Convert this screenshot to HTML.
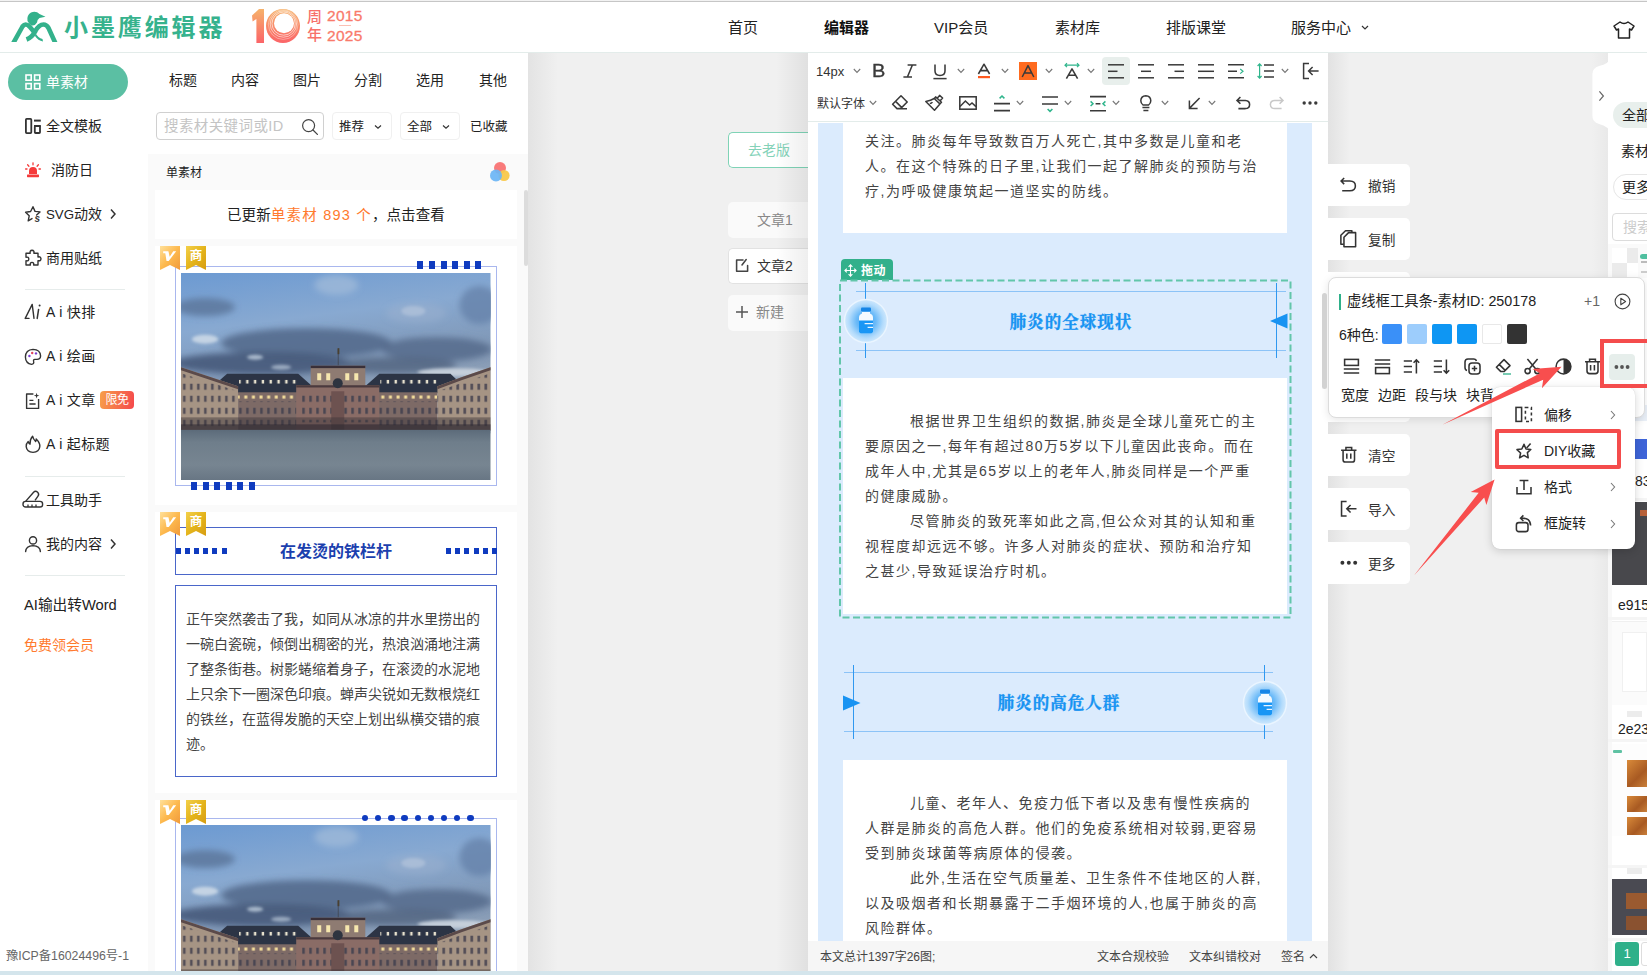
<!DOCTYPE html>
<html lang="zh-CN">
<head>
<meta charset="utf-8">
<title>小墨鹰编辑器</title>
<style>
*{box-sizing:border-box;margin:0;padding:0}
html,body{width:1647px;height:975px;overflow:hidden;background:#f0f0f0}
body{font-family:"Liberation Sans","Noto Sans CJK SC",sans-serif;font-size:14px;color:#222;position:relative}
.abs{position:absolute}
.t{position:absolute;white-space:nowrap;line-height:1}
svg{position:absolute;overflow:visible}
/* header */
#hdr{left:0;top:0;width:1647px;height:53px;background:#fff;border-top:1px solid #f2f2f2;border-bottom:1px solid #e3ecea}
/* left nav */
#nav{left:0;top:53px;width:148px;height:918px;background:#fff}
.ni{position:absolute;left:46px;font-size:14px;line-height:20px;white-space:nowrap;color:#222}
.sep{position:absolute;left:25px;width:100px;height:1px;background:#e6eceb}
/* material panel */
#mat{left:148px;top:53px;width:380px;height:918px;background:#fff}
#matg{left:148px;top:154px;width:380px;height:817px;background:#fafafa}
.card{position:absolute;left:155px;width:362px;background:#fff}
/* editor */
#ed{left:808px;top:53px;width:520px;height:918px;background:#fff}
#edbg{left:818px;top:123px;width:494px;height:825px;background:#dbebfd}
.p{position:absolute;font-size:14px;line-height:25.2px;letter-spacing:1px;color:#333;white-space:nowrap}
</style>
</head>
<body>
<div id="hdr" class="abs"></div><div class="abs" style="left:0;top:1px;width:1647px;height:1px;background:#c6c6c6"></div>
<div id="nav" class="abs"></div>
<div id="mat" class="abs"></div>
<div id="matg" class="abs"></div>
<div id="ed" class="abs"></div>
<div id="edbg" class="abs"></div>

<!-- header content -->
<svg style="left:0;top:0;overflow:hidden" width="60" height="42" viewBox="0 0 60 42">
 <g fill="none" stroke="#33b18b" stroke-width="4.6" stroke-linejoin="round">
  <path d="M13 43.6 L22.5 26.5 Q25.5 22.5 29.5 26.5 Q33 30.5 35.5 34"/>
  <path d="M26.5 39.5 Q32 37.5 35 31.5 Q39 24.5 43.5 24.5 Q46.5 24.5 48.5 28 L55.8 44"/>
 </g>
 <path d="M35.5 33 Q38 38 42.5 39 L43 41.5 Q38 40.5 35 36 Z" fill="#33b18b"/>
 <path d="M27.5 21 Q26.5 15 31 12.5 Q36 10.5 39.5 14 L45.5 16.8 L39.5 18 Q37 19.5 37 22.5 Q35 26 32 25.5 Q29 24.5 27.5 21 Z" fill="#33b18b"/>
</svg>
<div class="t" style="left:64px;top:16px;font-size:24px;font-weight:bold;color:#36b28d;letter-spacing:2.9px">小墨鹰编辑器</div>
<svg style="left:250px;top:8px" width="52" height="36" viewBox="0 0 52 36">
 <defs><linearGradient id="g10" x1="0" y1="0" x2="0" y2="1"><stop offset="0" stop-color="#f6b26b"/><stop offset="1" stop-color="#fb6468"/></linearGradient></defs>
 <path d="M2 7.5 L9 1 L14 1 L14 35 L6.4 35 L6.4 11 L2.6 13.4 Z" fill="url(#g10)"/>
 <circle cx="33" cy="18" r="17" fill="url(#g10)"/>
 <circle cx="34" cy="15.2" r="10" fill="#fff"/>
 <circle cx="33.6" cy="15.6" r="11.6" fill="none" stroke="#fff" stroke-width="0.7" opacity="0.9"/>
 <circle cx="33.4" cy="16" r="13.2" fill="none" stroke="#fff" stroke-width="0.7" opacity="0.8"/>
 <circle cx="33.2" cy="16.6" r="14.8" fill="none" stroke="#fff" stroke-width="0.6" opacity="0.6"/>
</svg>
<div class="t" style="left:307px;top:9px;font-size:15px;color:#f7706a;font-weight:500">周</div>
<div class="t" style="left:307px;top:27px;font-size:15px;color:#f7706a;font-weight:500">年</div>
<div class="t" style="left:327px;top:7.5px;font-size:15.5px;color:#f97a6b;letter-spacing:0.3px;-webkit-text-stroke:0.3px #f97a6b">2015</div>
<div class="t" style="left:327px;top:28px;font-size:15.5px;color:#f97a6b;letter-spacing:0.3px;-webkit-text-stroke:0.3px #f97a6b">2025</div>
<div class="abs" style="left:339px;top:25px;width:12px;height:1px;background:#fbc0b4"></div>
<div class="t" style="left:728px;top:19.5px;font-size:15px;color:#222">首页</div>
<div class="t" style="left:824px;top:19.5px;font-size:15px;color:#111;font-weight:bold">编辑器</div>
<div class="t" style="left:934px;top:19.5px;font-size:15px;color:#222">VIP会员</div>
<div class="t" style="left:1055px;top:19.5px;font-size:15px;color:#222">素材库</div>
<div class="t" style="left:1166px;top:19.5px;font-size:15px;color:#222">排版课堂</div>
<div class="t" style="left:1291px;top:19.5px;font-size:15px;color:#222">服务中心</div>
<svg style="left:1361px;top:25px" width="8" height="5" viewBox="0 0 8 5"><path d="M1 1 L4 4 L7 1" fill="none" stroke="#333" stroke-width="1.2"/></svg>
<svg style="left:1612px;top:20px" width="24" height="20" viewBox="0 0 24 20"><path d="M8 2 Q12 5 16 2 L22 6 L19.5 10 L17.5 9 L17.5 18 L6.5 18 L6.5 9 L4.5 10 L2 6 Z" fill="none" stroke="#222" stroke-width="1.5" stroke-linejoin="round"/></svg>
<!--HEADER-->
<!-- nav content -->
<div class="abs" style="left:8px;top:64px;width:120px;height:36px;border-radius:18px;background:#5bbfa3"></div>
<svg style="left:25px;top:74px" width="16" height="16" viewBox="0 0 16 16"><g fill="none" stroke="#fff" stroke-width="1.6"><rect x="1" y="1" width="5.2" height="5.2"/><rect x="9.6" y="1" width="5.2" height="5.2"/><rect x="1" y="9.6" width="5.2" height="5.2"/><rect x="9.6" y="9.6" width="5.2" height="5.2"/></g></svg>
<div class="ni" style="top:72px;left:46px;color:#fff">单素材</div>
<svg style="left:25px;top:118px" width="16" height="16" viewBox="0 0 16 16"><g fill="none" stroke="#333" stroke-width="1.8"><rect x="0.9" y="0.9" width="5.4" height="14.2" rx="0.8"/><path d="M9 2.6 H15.8" stroke-width="2"/><rect x="9.8" y="8" width="5.2" height="7" rx="0.8"/><path d="M9 8 H15.8" stroke-width="2"/></g></svg>
<div class="ni" style="top:116px;left:46px;color:#222">全文模板</div>
<svg style="left:25px;top:162px" width="16" height="16" viewBox="0 0 16 16"><g fill="#f53a3a"><path d="M4 12 V9 Q4 5 8 5 Q12 5 12 9 V12 Z"/><rect x="2" y="12.6" width="12" height="2.6" rx="0.6"/></g><g stroke="#f53a3a" stroke-width="1.3" stroke-linecap="round"><path d="M8 0.8 V2.8"/><path d="M2.6 2.8 L3.9 4.2"/><path d="M13.4 2.8 L12.1 4.2"/><path d="M0.6 7 H2"/><path d="M14 7 H15.4"/></g></svg>
<div class="ni" style="top:160px;left:51px;color:#222">消防日</div>
<svg style="left:24px;top:205px" width="18" height="18" viewBox="0 0 18 18"><path d="M9 1.8 L11 6.4 L16 6.9 L12.6 10 M8 13.6 L4.2 15.8 L5.2 10.8 L1.6 7.2 L6.6 6.5 L9 1.8" fill="none" stroke="#333" stroke-width="1.4" stroke-linejoin="round" stroke-linecap="round"/><text x="10.6" y="17" font-size="10" font-family="Liberation Sans, sans-serif" font-weight="bold" font-style="italic" fill="#333">s</text></svg>
<div class="ni" style="top:204px;left:46px;color:#222"><span style="font-size:13.3px">SVG</span>动效</div>
<svg style="left:109px;top:208px" width="8" height="12" viewBox="0 0 8 12"><path d="M2 1.5 L6 6 L2 10.5" fill="none" stroke="#333" stroke-width="1.5"/></svg>
<svg style="left:24px;top:249px" width="18" height="18" viewBox="0 0 18 18"><path d="M6.2 4.2 Q5.6 1.4 8 1.2 Q10.6 1.4 9.8 4.2 H14 V8 Q16.8 7.2 17 9.8 Q16.8 12.4 14 11.6 V16 H9.6 Q10.2 13.4 8 13.4 Q5.8 13.4 6.4 16 H2 V11.8 Q4.8 12.4 4.8 10 Q4.8 7.6 2 8.2 V4.2 Z" fill="none" stroke="#333" stroke-width="1.4" stroke-linejoin="round"/></svg>
<div class="ni" style="top:248px;left:46px;color:#222">商用贴纸</div>
<div class="sep" style="top:289px"></div>
<svg style="left:24px;top:303px" width="20" height="18" viewBox="0 0 20 18"><path d="M1.2 15.4 L8.2 1.4 L10 15.4 M1.2 15.4 H5" fill="none" stroke="#333" stroke-width="1.4" stroke-linejoin="round" stroke-linecap="round"/><path d="M14.6 6.4 L13.2 15.4" stroke="#333" stroke-width="1.5" stroke-linecap="round"/><circle cx="15.6" cy="2.6" r="1" fill="#333"/></svg>
<div class="ni" style="top:302px;left:46px;color:#222;letter-spacing:0.35px">A i 快排</div>
<svg style="left:24px;top:348px" width="18" height="18" viewBox="0 0 18 18"><path d="M9 1.4 Q16.4 1.6 16.6 8 Q16.4 11.6 12.6 11.4 H10.8 Q9.2 11.6 9.6 13.2 Q10.4 16 7.6 16.4 Q1.6 15.4 1.4 9 Q1.6 1.8 9 1.4 Z" fill="none" stroke="#333" stroke-width="1.4"/><circle cx="5.4" cy="8" r="1.2" fill="#7a3fd0"/><circle cx="8.2" cy="5" r="1.2" fill="#e0455a"/><circle cx="12" cy="5.4" r="1.2" fill="#7a3fd0"/></svg>
<div class="ni" style="top:346px;left:46px;color:#222;letter-spacing:0.35px">A i 绘画</div>
<svg style="left:25px;top:392px" width="16" height="18" viewBox="0 0 16 18"><path d="M8.4 2 H1.6 V16.4 H13.6 V7" fill="none" stroke="#333" stroke-width="1.4" stroke-linejoin="round"/><path d="M4.4 8.4 H8.4 M4.4 12 H10.6" stroke="#333" stroke-width="1.4"/><path d="M11.6 0.8 L12.3 2.9 L14.4 3.6 L12.3 4.3 L11.6 6.4 L10.9 4.3 L8.8 3.6 L10.9 2.9 Z" fill="#333"/></svg>
<div class="ni" style="top:390px;left:46px;color:#222;letter-spacing:0.35px">A i 文章</div>
<div class="abs" style="left:100px;top:391px;width:34px;height:18px;border-radius:4px;background:linear-gradient(100deg,#f7a04a,#f5484c);color:#fff;font-size:12px;line-height:18px;text-align:center;letter-spacing:-0.5px">限免</div>
<svg style="left:24px;top:435px" width="18" height="19" viewBox="0 0 18 19"><path d="M8.6 1.2 Q9.4 4.6 11.6 6.6 Q12.4 5.4 12.2 4 Q16.2 8 15.8 11.6 Q15.2 17 9 17.4 Q2.8 17 2.2 11.6 Q2 8.8 4.2 6.6 Q4.8 8.6 6 9.2 Q5.8 4.4 8.6 1.2 Z" fill="none" stroke="#333" stroke-width="1.4" stroke-linejoin="round"/></svg>
<div class="ni" style="top:434px;left:46px;color:#222;letter-spacing:0.35px">A i 起标题</div>
<div class="sep" style="top:476px"></div>
<svg style="left:22px;top:489px" width="22" height="20" viewBox="0 0 22 20"><path d="M3.4 12.6 L11.6 3.2 Q13.4 1.4 15.4 3 Q17.6 5 16 7.2 L13 11.4" fill="none" stroke="#333" stroke-width="1.4" stroke-linejoin="round"/><rect x="1" y="12.4" width="19.6" height="5.6" rx="2.6" fill="#fff" stroke="#333" stroke-width="1.4"/><path d="M6 15.4 V18 M10 15.4 V18 M14 15.4 V18" stroke="#333" stroke-width="1.3"/></svg>
<div class="ni" style="top:490px;left:46px;color:#222">工具助手</div>
<svg style="left:24px;top:535px" width="18" height="18" viewBox="0 0 18 18"><circle cx="9" cy="5.4" r="3.6" fill="none" stroke="#333" stroke-width="1.4"/><path d="M1.6 16.6 Q2 10.8 9 10.6 Q16 10.8 16.4 16.6" fill="none" stroke="#333" stroke-width="1.4" stroke-linecap="round"/></svg>
<div class="ni" style="top:534px;left:46px;color:#222">我的内容</div>
<svg style="left:109px;top:538px" width="8" height="12" viewBox="0 0 8 12"><path d="M2 1.5 L6 6 L2 10.5" fill="none" stroke="#333" stroke-width="1.5"/></svg>
<div class="sep" style="top:575px"></div>
<div class="ni" style="top:595px;left:24px;color:#222;font-size:14.7px">AI输出转Word</div>
<div class="ni" style="top:635px;left:24px;color:#ff7a2e;font-size:14px">免费领会员</div>
<div class="t" style="left:6px;top:950px;font-size:12.3px;color:#666">豫ICP备16024496号-1</div>
<!--NAV-->
<!--BEGIN mat-->
<!-- material panel -->
<div class="t" style="left:169px;top:73px;font-size:14px;color:#222">标题</div>
<div class="t" style="left:231px;top:73px;font-size:14px;color:#222">内容</div>
<div class="t" style="left:293px;top:73px;font-size:14px;color:#222">图片</div>
<div class="t" style="left:354px;top:73px;font-size:14px;color:#222">分割</div>
<div class="t" style="left:416px;top:73px;font-size:14px;color:#222">选用</div>
<div class="t" style="left:479px;top:73px;font-size:14px;color:#222">其他</div>
<div class="abs" style="left:156px;top:112px;width:168px;height:28px;border:1px solid #d0d0d0;border-radius:4px;background:#fff"></div>
<div class="t" style="left:164px;top:119px;font-size:14.5px;color:#c4c4c4;letter-spacing:0.4px">搜素材关键词或ID</div>
<svg style="left:301px;top:118px" width="18" height="18" viewBox="0 0 18 18"><circle cx="7.6" cy="7.6" r="6" fill="none" stroke="#444" stroke-width="1.2"/><path d="M12 12 L16.4 16.4" stroke="#444" stroke-width="1.3" stroke-linecap="round"/></svg>
<div class="abs" style="left:332px;top:112px;width:60px;height:28px;border:1px solid #f0f0f0;border-radius:4px;background:#fff"></div>
<div class="t" style="left:339px;top:121px;font-size:12.5px;color:#222">推荐</div>
<svg style="left:374px;top:124px" width="8" height="6" viewBox="0 0 8 6"><path d="M1 1.5 L4 4.2 L7 1.5" fill="none" stroke="#333" stroke-width="1.2"/></svg>
<div class="abs" style="left:400px;top:112px;width:60px;height:28px;border:1px solid #f0f0f0;border-radius:4px;background:#fff"></div>
<div class="t" style="left:407px;top:121px;font-size:12.5px;color:#222">全部</div>
<svg style="left:442px;top:124px" width="8" height="6" viewBox="0 0 8 6"><path d="M1 1.5 L4 4.2 L7 1.5" fill="none" stroke="#333" stroke-width="1.2"/></svg>
<div class="t" style="left:470px;top:121px;font-size:12.5px;color:#222">已收藏</div>
<div class="t" style="left:166px;top:167px;font-size:12px;color:#222">单素材</div>
<svg style="left:489px;top:161px" width="22" height="22" viewBox="0 0 22 22"><circle cx="11" cy="7" r="6" fill="#f97474" opacity="0.95"/><circle cx="15" cy="14.5" r="5.6" fill="#f9c84a" opacity="0.95"/><circle cx="7" cy="14.5" r="6" fill="#6bb5f5" opacity="0.92"/></svg>
<div class="card" style="top:190px;height:49px"></div>
<div class="t" style="left:227px;top:208px;font-size:14.5px;color:#222;letter-spacing:0.1px">已更新<span style="color:#ff7a2e;letter-spacing:1.2px">单素材 893 个</span>，点击查看</div>
<div class="abs" style="left:524px;top:190px;width:4px;height:76px;border-radius:2px;background:#dcdcdc"></div>
<div class="card" style="top:246px;height:259px"></div>
<div class="abs" style="left:175px;top:266px;width:322px;height:220px;border:1px solid #a9b7ee"></div>
<svg style="left:181px;top:272.5px;overflow:hidden" width="309.5" height="207" overflow="hidden" viewBox="0 0 309 206.50" preserveAspectRatio="none">
<defs>
<linearGradient id="skya" x1="0" y1="0" x2="0.25" y2="1"><stop offset="0" stop-color="#6c9ad2"/><stop offset="0.35" stop-color="#88a9d1"/><stop offset="0.7" stop-color="#7f95b2"/><stop offset="1" stop-color="#a9b6c5"/></linearGradient>
<linearGradient id="gnda" x1="0" y1="0" x2="0" y2="1"><stop offset="0" stop-color="#5c6b7a"/><stop offset="0.25" stop-color="#6f7e8b"/><stop offset="0.7" stop-color="#778591"/><stop offset="1" stop-color="#687684"/></linearGradient>
<filter id="bla" x="-20%" y="-50%" width="140%" height="200%"><feGaussianBlur stdDeviation="3.2"/></filter>
<filter id="bsa" x="-20%" y="-50%" width="140%" height="200%"><feGaussianBlur stdDeviation="1.5"/></filter>
<pattern id="wina" x="0" y="0" width="7" height="12" patternUnits="userSpaceOnUse"><rect x="2" y="2.5" width="2.6" height="6" fill="#4a4652"/></pattern>
<pattern id="winla" x="0" y="122" width="7.6" height="40" patternUnits="userSpaceOnUse"><rect x="2.4" y="0" width="3" height="3.4" fill="#f2dc9a"/></pattern>
<pattern id="dorma" x="0" y="106.5" width="7.8" height="40" patternUnits="userSpaceOnUse"><rect x="2.6" y="0" width="2.4" height="4" fill="#e9e3cf"/></pattern>
</defs>
<rect x="0" y="0" width="309" height="160" fill="url(#skya)"/>
<g filter="url(#bla)">
<ellipse cx="24" cy="34" rx="30" ry="9" fill="#5a7499" opacity="0.8"/>
<ellipse cx="298" cy="32" rx="20" ry="19" fill="#6380a8" opacity="0.75"/>
<ellipse cx="125" cy="70" rx="85" ry="15" fill="#52678a" opacity="0.85"/>
<ellipse cx="80" cy="90" rx="90" ry="11" fill="#465a7a" opacity="0.9"/>
<ellipse cx="255" cy="76" rx="55" ry="12" fill="#566b8c" opacity="0.85"/>
<ellipse cx="215" cy="92" rx="60" ry="8" fill="#51647f" opacity="0.8"/>
<ellipse cx="155" cy="12" rx="22" ry="10" fill="#a3bcda" opacity="0.7"/>
<ellipse cx="235" cy="40" rx="30" ry="10" fill="#9bb2d0" opacity="0.5"/>
</g>
<g filter="url(#bsa)">
<ellipse cx="24" cy="66" rx="13" ry="4.5" fill="#cbd8e7" opacity="0.9"/>
<ellipse cx="74" cy="84" rx="8" ry="2.5" fill="#c1cfdf" opacity="0.8"/>
<ellipse cx="100" cy="94" rx="10" ry="2.5" fill="#bccadb" opacity="0.7"/>
<ellipse cx="272" cy="99" rx="36" ry="4" fill="#cbd4de" opacity="0.9"/>
<ellipse cx="232" cy="38" rx="12" ry="5" fill="#b3c5db" opacity="0.7"/>
</g>
<!-- roofs -->
<polygon points="33,112 46,100.5 117,100.5 130,112 130,120 57,120" fill="#2c3445"/>
<polygon points="185,112 198,100.5 269,100.5 281,112 257,120 185,120" fill="#2c3445"/>
<rect x="58" y="106.5" width="58" height="4" fill="url(#dorma)"/>
<rect x="199" y="106.5" width="58" height="4" fill="url(#dorma)"/>
<!-- facades -->
<rect x="57" y="119" width="60" height="38" fill="#7d6a66"/>
<rect x="196" y="119" width="60" height="38" fill="#7d6a66"/>
<rect x="57" y="122" width="60" height="4" fill="url(#winla)"/>
<rect x="196" y="122" width="60" height="4" fill="url(#winla)"/>
<rect x="57" y="128" width="60" height="24" fill="url(#wina)"/>
<rect x="196" y="128" width="60" height="24" fill="url(#wina)"/>
<!-- wings -->
<polygon points="0,94 30,104 57,113 57,157 0,157" fill="#a69484"/>
<polygon points="309,94 280,104 256,113 256,157 309,157" fill="#a69484"/>
<polygon points="0,94 30,104 57,113 57,116 30,107 0,97" fill="#5b4a4a"/>
<polygon points="309,94 280,104 256,113 256,116 280,107 309,97" fill="#5b4a4a"/>
<polygon points="0,100 57,118 57,157 0,157" fill="url(#wina)" opacity="0.9"/>
<polygon points="309,100 256,118 256,157 309,157" fill="url(#wina)" opacity="0.9"/>
<!-- centre -->
<rect x="129.5" y="92.5" width="54.5" height="21" fill="#8e7b72"/>
<rect x="129.5" y="92.5" width="54.5" height="2.4" fill="#3a3038"/>
<rect x="136" y="100" width="4" height="7" fill="#f6e7ae"/><rect x="145" y="100" width="4" height="7" fill="#f6e7ae"/><rect x="164" y="100" width="4" height="7" fill="#f6e7ae"/><rect x="173" y="100" width="4" height="7" fill="#f6e7ae"/>
<rect x="115" y="112" width="83" height="45" fill="#8a6c66"/>
<rect x="115" y="112" width="83" height="2.2" fill="#4a3a3e"/>
<rect x="118" y="119" width="78" height="30" fill="url(#wina)"/>
<rect x="150" y="118" width="13" height="39" fill="#6d5250"/>
<circle cx="156.5" cy="110" r="5" fill="#2e3440"/>
<path d="M157 92 V76" stroke="#3a3a40" stroke-width="0.6"/><rect x="156.3" y="75" width="1.8" height="6" fill="#4a4030"/>
<!-- base dark arches -->
<rect x="0" y="144" width="309" height="13" fill="#3a3238" opacity="0.45"/><rect x="0" y="151" width="309" height="6" fill="#2e2a32" opacity="0.6"/>
<!-- ground -->
<rect x="0" y="156.5" width="309" height="50" fill="url(#gnda)"/>
</svg>
<div class="abs" style="left:417.3px;top:261px;width:6px;height:7.5px;background:#0f3bbf"></div><div class="abs" style="left:428.9px;top:261px;width:6px;height:7.5px;background:#0f3bbf"></div><div class="abs" style="left:440.5px;top:261px;width:6px;height:7.5px;background:#0f3bbf"></div><div class="abs" style="left:452.1px;top:261px;width:6px;height:7.5px;background:#0f3bbf"></div><div class="abs" style="left:463.7px;top:261px;width:6px;height:7.5px;background:#0f3bbf"></div><div class="abs" style="left:475.3px;top:261px;width:6px;height:7.5px;background:#0f3bbf"></div>
<div class="abs" style="left:191.0px;top:482px;width:6px;height:7.5px;background:#0f3bbf"></div><div class="abs" style="left:202.6px;top:482px;width:6px;height:7.5px;background:#0f3bbf"></div><div class="abs" style="left:214.2px;top:482px;width:6px;height:7.5px;background:#0f3bbf"></div><div class="abs" style="left:225.8px;top:482px;width:6px;height:7.5px;background:#0f3bbf"></div><div class="abs" style="left:237.4px;top:482px;width:6px;height:7.5px;background:#0f3bbf"></div><div class="abs" style="left:249.0px;top:482px;width:6px;height:7.5px;background:#0f3bbf"></div>
<svg style="left:160px;top:246px" width="46" height="24" viewBox="0 0 46 24"><defs><linearGradient id="bg1" x1="0" y1="0" x2="1" y2="1"><stop offset="0" stop-color="#ffe09a"/><stop offset="0.5" stop-color="#fdb94e"/><stop offset="1" stop-color="#f0993a"/></linearGradient><linearGradient id="bg2" x1="0" y1="0" x2="1" y2="1"><stop offset="0" stop-color="#f3d04a"/><stop offset="0.5" stop-color="#e4b41c"/><stop offset="1" stop-color="#d79d12"/></linearGradient></defs><path d="M0 0 H20 V24 L10 18.9 L0 24 Z" fill="url(#bg1)"/><path d="M26 0 H46 V24 L36 18.9 L26 24 Z" fill="url(#bg2)"/><path d="M3.2 5.2 H8.4 L9.7 10.8 L13.2 5.2 H16.2 L8.7 15 H6.5 L5.3 7.2 H3.2 Z" fill="#fff"/><text x="36" y="14.3" font-size="12.5" font-weight="bold" text-anchor="middle" fill="#fff" font-family="Liberation Sans, Noto Sans CJK SC, sans-serif">商</text></svg>
<div class="card" style="top:512px;height:281px"></div>
<div class="abs" style="left:175px;top:527px;width:322px;height:48px;border:1px solid #4a66c9"></div>
<div class="abs" style="left:175.5px;top:547.5px;width:5px;height:6px;background:#0f3bbf"></div><div class="abs" style="left:184.7px;top:547.5px;width:5px;height:6px;background:#0f3bbf"></div><div class="abs" style="left:193.9px;top:547.5px;width:5px;height:6px;background:#0f3bbf"></div><div class="abs" style="left:203.1px;top:547.5px;width:5px;height:6px;background:#0f3bbf"></div><div class="abs" style="left:212.3px;top:547.5px;width:5px;height:6px;background:#0f3bbf"></div><div class="abs" style="left:221.5px;top:547.5px;width:5px;height:6px;background:#0f3bbf"></div>
<div class="abs" style="left:446.0px;top:547.5px;width:5px;height:6px;background:#0f3bbf"></div><div class="abs" style="left:455.2px;top:547.5px;width:5px;height:6px;background:#0f3bbf"></div><div class="abs" style="left:464.4px;top:547.5px;width:5px;height:6px;background:#0f3bbf"></div><div class="abs" style="left:473.6px;top:547.5px;width:5px;height:6px;background:#0f3bbf"></div><div class="abs" style="left:482.8px;top:547.5px;width:5px;height:6px;background:#0f3bbf"></div><div class="abs" style="left:492.0px;top:547.5px;width:5px;height:6px;background:#0f3bbf"></div>
<div class="t" style="left:176px;width:320px;text-align:center;top:544px;font-size:16px;font-weight:bold;color:#1b3fae">在发烫的铁栏杆</div>
<div class="abs" style="left:175px;top:585px;width:322px;height:192px;border:1px solid #4a66c9"></div>
<div class="t" style="left:186px;top:611.7px;font-size:14px;color:#444">正午突然袭击了我，如同从冰凉的井水里捞出的</div>
<div class="t" style="left:186px;top:636.7px;font-size:14px;color:#444">一碗白瓷碗，倾倒出稠密的光，热浪汹涌地注满</div>
<div class="t" style="left:186px;top:661.7px;font-size:14px;color:#444">了整条街巷。树影蜷缩着身子，在滚烫的水泥地</div>
<div class="t" style="left:186px;top:686.7px;font-size:14px;color:#444">上只余下一圈深色印痕。蝉声尖锐如无数根烧红</div>
<div class="t" style="left:186px;top:711.7px;font-size:14px;color:#444">的铁丝，在蓝得发脆的天空上划出纵横交错的痕</div>
<div class="t" style="left:186px;top:736.7px;font-size:14px;color:#444">迹。</div>
<svg style="left:160px;top:512px" width="46" height="24" viewBox="0 0 46 24"><defs><linearGradient id="bg1" x1="0" y1="0" x2="1" y2="1"><stop offset="0" stop-color="#ffe09a"/><stop offset="0.5" stop-color="#fdb94e"/><stop offset="1" stop-color="#f0993a"/></linearGradient><linearGradient id="bg2" x1="0" y1="0" x2="1" y2="1"><stop offset="0" stop-color="#f3d04a"/><stop offset="0.5" stop-color="#e4b41c"/><stop offset="1" stop-color="#d79d12"/></linearGradient></defs><path d="M0 0 H20 V24 L10 18.9 L0 24 Z" fill="url(#bg1)"/><path d="M26 0 H46 V24 L36 18.9 L26 24 Z" fill="url(#bg2)"/><path d="M3.2 5.2 H8.4 L9.7 10.8 L13.2 5.2 H16.2 L8.7 15 H6.5 L5.3 7.2 H3.2 Z" fill="#fff"/><text x="36" y="14.3" font-size="12.5" font-weight="bold" text-anchor="middle" fill="#fff" font-family="Liberation Sans, Noto Sans CJK SC, sans-serif">商</text></svg>
<div class="card" style="top:800px;height:171px"></div>
<div class="abs" style="left:175px;top:818px;width:322px;height:160px;border:1px solid #a9b7ee;border-bottom:none"></div>
<svg style="left:181px;top:825px;overflow:hidden" width="309.5" height="146" overflow="hidden" viewBox="0 0 309 145.65" preserveAspectRatio="none">
<defs>
<linearGradient id="skyb" x1="0" y1="0" x2="0.25" y2="1"><stop offset="0" stop-color="#6c9ad2"/><stop offset="0.35" stop-color="#88a9d1"/><stop offset="0.7" stop-color="#7f95b2"/><stop offset="1" stop-color="#a9b6c5"/></linearGradient>
<linearGradient id="gndb" x1="0" y1="0" x2="0" y2="1"><stop offset="0" stop-color="#5c6b7a"/><stop offset="0.25" stop-color="#6f7e8b"/><stop offset="0.7" stop-color="#778591"/><stop offset="1" stop-color="#687684"/></linearGradient>
<filter id="blb" x="-20%" y="-50%" width="140%" height="200%"><feGaussianBlur stdDeviation="3.2"/></filter>
<filter id="bsb" x="-20%" y="-50%" width="140%" height="200%"><feGaussianBlur stdDeviation="1.5"/></filter>
<pattern id="winb" x="0" y="0" width="7" height="12" patternUnits="userSpaceOnUse"><rect x="2" y="2.5" width="2.6" height="6" fill="#4a4652"/></pattern>
<pattern id="winlb" x="0" y="122" width="7.6" height="40" patternUnits="userSpaceOnUse"><rect x="2.4" y="0" width="3" height="3.4" fill="#f2dc9a"/></pattern>
<pattern id="dormb" x="0" y="106.5" width="7.8" height="40" patternUnits="userSpaceOnUse"><rect x="2.6" y="0" width="2.4" height="4" fill="#e9e3cf"/></pattern>
</defs>
<rect x="0" y="0" width="309" height="160" fill="url(#skyb)"/>
<g filter="url(#blb)">
<ellipse cx="24" cy="34" rx="30" ry="9" fill="#5a7499" opacity="0.8"/>
<ellipse cx="298" cy="32" rx="20" ry="19" fill="#6380a8" opacity="0.75"/>
<ellipse cx="125" cy="70" rx="85" ry="15" fill="#52678a" opacity="0.85"/>
<ellipse cx="80" cy="90" rx="90" ry="11" fill="#465a7a" opacity="0.9"/>
<ellipse cx="255" cy="76" rx="55" ry="12" fill="#566b8c" opacity="0.85"/>
<ellipse cx="215" cy="92" rx="60" ry="8" fill="#51647f" opacity="0.8"/>
<ellipse cx="155" cy="12" rx="22" ry="10" fill="#a3bcda" opacity="0.7"/>
<ellipse cx="235" cy="40" rx="30" ry="10" fill="#9bb2d0" opacity="0.5"/>
</g>
<g filter="url(#bsb)">
<ellipse cx="24" cy="66" rx="13" ry="4.5" fill="#cbd8e7" opacity="0.9"/>
<ellipse cx="74" cy="84" rx="8" ry="2.5" fill="#c1cfdf" opacity="0.8"/>
<ellipse cx="100" cy="94" rx="10" ry="2.5" fill="#bccadb" opacity="0.7"/>
<ellipse cx="272" cy="99" rx="36" ry="4" fill="#cbd4de" opacity="0.9"/>
<ellipse cx="232" cy="38" rx="12" ry="5" fill="#b3c5db" opacity="0.7"/>
</g>
<!-- roofs -->
<polygon points="33,112 46,100.5 117,100.5 130,112 130,120 57,120" fill="#2c3445"/>
<polygon points="185,112 198,100.5 269,100.5 281,112 257,120 185,120" fill="#2c3445"/>
<rect x="58" y="106.5" width="58" height="4" fill="url(#dormb)"/>
<rect x="199" y="106.5" width="58" height="4" fill="url(#dormb)"/>
<!-- facades -->
<rect x="57" y="119" width="60" height="38" fill="#7d6a66"/>
<rect x="196" y="119" width="60" height="38" fill="#7d6a66"/>
<rect x="57" y="122" width="60" height="4" fill="url(#winlb)"/>
<rect x="196" y="122" width="60" height="4" fill="url(#winlb)"/>
<rect x="57" y="128" width="60" height="24" fill="url(#winb)"/>
<rect x="196" y="128" width="60" height="24" fill="url(#winb)"/>
<!-- wings -->
<polygon points="0,94 30,104 57,113 57,157 0,157" fill="#a69484"/>
<polygon points="309,94 280,104 256,113 256,157 309,157" fill="#a69484"/>
<polygon points="0,94 30,104 57,113 57,116 30,107 0,97" fill="#5b4a4a"/>
<polygon points="309,94 280,104 256,113 256,116 280,107 309,97" fill="#5b4a4a"/>
<polygon points="0,100 57,118 57,157 0,157" fill="url(#winb)" opacity="0.9"/>
<polygon points="309,100 256,118 256,157 309,157" fill="url(#winb)" opacity="0.9"/>
<!-- centre -->
<rect x="129.5" y="92.5" width="54.5" height="21" fill="#8e7b72"/>
<rect x="129.5" y="92.5" width="54.5" height="2.4" fill="#3a3038"/>
<rect x="136" y="100" width="4" height="7" fill="#f6e7ae"/><rect x="145" y="100" width="4" height="7" fill="#f6e7ae"/><rect x="164" y="100" width="4" height="7" fill="#f6e7ae"/><rect x="173" y="100" width="4" height="7" fill="#f6e7ae"/>
<rect x="115" y="112" width="83" height="45" fill="#8a6c66"/>
<rect x="115" y="112" width="83" height="2.2" fill="#4a3a3e"/>
<rect x="118" y="119" width="78" height="30" fill="url(#winb)"/>
<rect x="150" y="118" width="13" height="39" fill="#6d5250"/>
<circle cx="156.5" cy="110" r="5" fill="#2e3440"/>
<path d="M157 92 V76" stroke="#3a3a40" stroke-width="0.6"/><rect x="156.3" y="75" width="1.8" height="6" fill="#4a4030"/>
<!-- base dark arches -->
<rect x="0" y="144" width="309" height="13" fill="#3a3238" opacity="0.45"/><rect x="0" y="151" width="309" height="6" fill="#2e2a32" opacity="0.6"/>
<!-- ground -->
<rect x="0" y="156.5" width="309" height="50" fill="url(#gndb)"/>
</svg>
<div class="abs" style="left:362.0px;top:815px;width:6.4px;height:6.4px;background:#0f3bbf;border-radius:50%"></div><div class="abs" style="left:375.1px;top:815px;width:6.4px;height:6.4px;background:#0f3bbf;border-radius:50%"></div><div class="abs" style="left:388.3px;top:815px;width:6.4px;height:6.4px;background:#0f3bbf;border-radius:50%"></div><div class="abs" style="left:401.4px;top:815px;width:6.4px;height:6.4px;background:#0f3bbf;border-radius:50%"></div><div class="abs" style="left:414.6px;top:815px;width:6.4px;height:6.4px;background:#0f3bbf;border-radius:50%"></div><div class="abs" style="left:427.8px;top:815px;width:6.4px;height:6.4px;background:#0f3bbf;border-radius:50%"></div><div class="abs" style="left:440.9px;top:815px;width:6.4px;height:6.4px;background:#0f3bbf;border-radius:50%"></div><div class="abs" style="left:454.1px;top:815px;width:6.4px;height:6.4px;background:#0f3bbf;border-radius:50%"></div><div class="abs" style="left:467.2px;top:815px;width:6.4px;height:6.4px;background:#0f3bbf;border-radius:50%"></div>
<svg style="left:160px;top:800px" width="46" height="24" viewBox="0 0 46 24"><defs><linearGradient id="bg1" x1="0" y1="0" x2="1" y2="1"><stop offset="0" stop-color="#ffe09a"/><stop offset="0.5" stop-color="#fdb94e"/><stop offset="1" stop-color="#f0993a"/></linearGradient><linearGradient id="bg2" x1="0" y1="0" x2="1" y2="1"><stop offset="0" stop-color="#f3d04a"/><stop offset="0.5" stop-color="#e4b41c"/><stop offset="1" stop-color="#d79d12"/></linearGradient></defs><path d="M0 0 H20 V24 L10 18.9 L0 24 Z" fill="url(#bg1)"/><path d="M26 0 H46 V24 L36 18.9 L26 24 Z" fill="url(#bg2)"/><path d="M3.2 5.2 H8.4 L9.7 10.8 L13.2 5.2 H16.2 L8.7 15 H6.5 L5.3 7.2 H3.2 Z" fill="#fff"/><text x="36" y="14.3" font-size="12.5" font-weight="bold" text-anchor="middle" fill="#fff" font-family="Liberation Sans, Noto Sans CJK SC, sans-serif">商</text></svg>
<!--MAT-->
<!--BEGIN mid-->
<div class="abs" style="left:528px;top:53px;width:30px;height:918px;background:linear-gradient(90deg,#e3e3e3,#f0f0f0)"></div>
<div class="abs" style="left:728px;top:132px;width:80px;height:36px;border:1px solid #7fd3b6;border-right:none;border-radius:5px 0 0 5px;background:#fff"></div>
<div class="t" style="left:748px;top:143px;font-size:14px;color:#84d2b8">去老版</div>
<div class="abs" style="left:728px;top:202px;width:80px;height:36px;border-radius:5px 0 0 5px;background:#fafafa"></div>
<div class="t" style="left:757px;top:213px;font-size:14px;color:#888">文章1</div>
<div class="abs" style="left:728px;top:248px;width:80px;height:36px;border:1px solid #e2e2e2;border-right:none;border-radius:5px 0 0 5px;background:#fff"></div>
<svg style="left:735px;top:258px" width="15" height="15" viewBox="0 0 15 15"><path d="M11.2 1.6 L7 7 M8 2 H1.6 V13.2 H12.6 V7.4" fill="none" stroke="#444" stroke-width="1.55" stroke-linecap="round" stroke-linejoin="round"/></svg>
<div class="t" style="left:757px;top:259px;font-size:14px;color:#333">文章2</div>
<div class="abs" style="left:728px;top:295px;width:80px;height:36px;border-radius:5px 0 0 5px;background:#fafafa"></div>
<svg style="left:735px;top:305px" width="14" height="14" viewBox="0 0 14 14"><path d="M7 1 V13 M1 7 H13" stroke="#555" stroke-width="1.5"/></svg>
<div class="t" style="left:756px;top:305px;font-size:14px;color:#888">新建</div>
<div class="abs" style="left:776px;top:53px;width:32px;height:918px;background:linear-gradient(90deg,rgba(0,0,0,0),rgba(0,0,0,0.065))"></div>
<!--MID-->
<!--BEGIN tb-->
<div class="abs" style="left:808px;top:121px;width:520px;height:1px;background:#e3ecea"></div>
<div class="t" style="left:816px;top:65px;font-size:13px;color:#333">14px</div>
<svg style="left:853px;top:68px" width="8" height="6" viewBox="0 0 8 6"><path d="M0.8 1 L4 4.4 L7.2 1" fill="none" stroke="#777" stroke-width="1.1"/></svg>
<div class="t" style="left:872px;top:62px;font-size:18.5px;color:#3a3a3a;-webkit-text-stroke:0.35px #3a3a3a;transform:scaleX(1.08);transform-origin:0 0">B</div>
<svg style="left:902px;top:64px" width="16" height="14" viewBox="0 0 16 14"><path d="M5.6 1 H14.4 M1.4 13 H10 M10.4 1 L5.4 13" stroke="#3a3a3a" stroke-width="1.55" fill="none"/></svg>
<svg style="left:932px;top:63px" width="16" height="17" viewBox="0 0 16 17"><path d="M3 1.4 V8 Q3 12.4 8 12.4 Q13 12.4 13 8 V1.4" stroke="#3a3a3a" stroke-width="1.55" fill="none"/><path d="M1.4 15.6 H14.6" stroke="#3a3a3a" stroke-width="1.5"/></svg>
<svg style="left:957px;top:68px" width="8" height="6" viewBox="0 0 8 6"><path d="M0.8 1 L4 4.4 L7.2 1" fill="none" stroke="#777" stroke-width="1.1"/></svg>
<svg style="left:977px;top:63px" width="14" height="16" viewBox="0 0 14 16"><path d="M1.4 11 L7 1.2 L12.6 11 M3.4 7.6 H10.6" stroke="#3a3a3a" stroke-width="1.55" fill="none" stroke-linejoin="round"/><rect x="1" y="13" width="12" height="2.2" fill="#ff5a1f"/></svg>
<svg style="left:1001px;top:68px" width="8" height="6" viewBox="0 0 8 6"><path d="M0.8 1 L4 4.4 L7.2 1" fill="none" stroke="#777" stroke-width="1.1"/></svg>
<div class="abs" style="left:1019px;top:62px;width:18px;height:18px;background:#ff6b1f"></div>
<svg style="left:1021px;top:64px" width="14" height="14" viewBox="0 0 14 14"><path d="M1.2 13 L7 1.6 L12.8 13 M3.4 9 H10.6" stroke="#3a3a3a" stroke-width="1.5" fill="none" stroke-linejoin="round"/></svg>
<svg style="left:1045px;top:68px" width="8" height="6" viewBox="0 0 8 6"><path d="M0.8 1 L4 4.4 L7.2 1" fill="none" stroke="#777" stroke-width="1.1"/></svg>
<svg style="left:1063px;top:62px" width="18" height="18" viewBox="0 0 18 18"><path d="M3.4 16.6 L9 6.8 L14.6 16.6 M5.4 13.2 H12.6" stroke="#3a3a3a" stroke-width="1.55" fill="none" stroke-linejoin="round"/><path d="M2 3.2 H16 M4 1.2 L2 3.2 L4 5.2 M14 1.2 L16 3.2 L14 5.2" stroke="#2fb58c" stroke-width="1.2" fill="none"/></svg>
<svg style="left:1087px;top:68px" width="8" height="6" viewBox="0 0 8 6"><path d="M0.8 1 L4 4.4 L7.2 1" fill="none" stroke="#777" stroke-width="1.1"/></svg>
<div class="abs" style="left:1102px;top:57px;width:28px;height:28px;border-radius:4px;background:#e8efec"></div>
<svg style="left:1108px;top:63px" width="16" height="16" viewBox="0 0 16 16"><path d="M0 1.8 H16" stroke="#3a3a3a" stroke-width="1.5"/><path d="M0 8.3 H9.5" stroke="#3a3a3a" stroke-width="1.5"/><path d="M0 14.8 H16" stroke="#3a3a3a" stroke-width="1.5"/></svg>
<svg style="left:1138px;top:63px" width="16" height="16" viewBox="0 0 16 16"><path d="M0 1.8 H16" stroke="#3a3a3a" stroke-width="1.5"/><path d="M3 8.3 H13" stroke="#3a3a3a" stroke-width="1.5"/><path d="M0 14.8 H16" stroke="#3a3a3a" stroke-width="1.5"/></svg>
<svg style="left:1168px;top:63px" width="16" height="16" viewBox="0 0 16 16"><path d="M0 1.8 H16" stroke="#3a3a3a" stroke-width="1.5"/><path d="M6.5 8.3 H16" stroke="#3a3a3a" stroke-width="1.5"/><path d="M0 14.8 H16" stroke="#3a3a3a" stroke-width="1.5"/></svg>
<svg style="left:1198px;top:63px" width="16" height="16" viewBox="0 0 16 16"><path d="M0 1.8 H16" stroke="#3a3a3a" stroke-width="1.5"/><path d="M0 8.3 H16" stroke="#3a3a3a" stroke-width="1.5"/><path d="M0 14.8 H16" stroke="#3a3a3a" stroke-width="1.5"/></svg>
<svg style="left:1228px;top:63px" width="16" height="16" viewBox="0 0 16 16"><path d="M0 1.8 H16 M0 8.3 H9 M0 14.8 H16" stroke="#3a3a3a" stroke-width="1.5"/><path d="M12.2 6 L15 8.3 L12.2 10.6" stroke="#2fb58c" stroke-width="1.2" fill="none"/></svg>
<svg style="left:1257px;top:62px" width="18" height="18" viewBox="0 0 18 18"><path d="M7 3 H17 M7 9 H17 M7 15 H17" stroke="#3a3a3a" stroke-width="1.5"/><path d="M2.6 2 V16 M0.6 4 L2.6 1.8 L4.6 4 M0.6 14 L2.6 16.2 L4.6 14" stroke="#2fb58c" stroke-width="1.2" fill="none"/></svg>
<svg style="left:1281px;top:68px" width="8" height="6" viewBox="0 0 8 6"><path d="M0.8 1 L4 4.4 L7.2 1" fill="none" stroke="#777" stroke-width="1.1"/></svg>
<svg style="left:1302px;top:62px" width="18" height="18" viewBox="0 0 18 18"><path d="M7 1.6 H1.6 V16.4 H7" stroke="#3a3a3a" stroke-width="1.5" fill="none"/><path d="M16.6 9 H7 M10.6 5 L6.6 9 L10.6 13" stroke="#3a3a3a" stroke-width="1.5" fill="none"/></svg>
<div class="t" style="left:817px;top:98px;font-size:12px;color:#333">默认字体</div>
<svg style="left:869px;top:100px" width="8" height="6" viewBox="0 0 8 6"><path d="M0.8 1 L4 4.4 L7.2 1" fill="none" stroke="#777" stroke-width="1.1"/></svg>
<svg style="left:891px;top:94.3px" width="18" height="17" viewBox="0 0 18 17"><path d="M6 14.6 L1.6 10.2 L10 1.8 L16.2 8 L9.6 14.6 Z M4.6 7.4 L10.8 13.6 M6 14.8 H16" stroke="#3a3a3a" stroke-width="1.55" fill="none" stroke-linejoin="round"/></svg>
<svg style="left:925px;top:94px" width="18" height="18" viewBox="0 0 18 18"><path d="M0.8 7.5 Q6 6.6 9.2 4.5 L14.9 9.9 L9.5 16.3 Z M9.2 4.5 L10.6 2.9 L16.5 8.3 L14.9 9.9 M12.2 4.2 L14.6 1.4 L17.6 4 L15.2 6.8 M4.8 9.6 Q6.6 9.4 7.4 8.2" stroke="#3a3a3a" stroke-width="1.5" fill="none" stroke-linejoin="round"/></svg>
<svg style="left:959px;top:96px" width="18" height="14" viewBox="0 0 18 14"><rect x="0.8" y="0.8" width="16.4" height="12.4" stroke="#3a3a3a" stroke-width="1.55" fill="none"/><path d="M1 10.6 L6.4 5 L10.6 9 L13 7 L17 10.6" stroke="#3a3a3a" stroke-width="1.5" fill="none"/></svg>
<svg style="left:994px;top:94px" width="16" height="19" viewBox="0 0 16 19"><path d="M0 9.6 H16 M0 16.6 H16" stroke="#3a3a3a" stroke-width="1.55"/><path d="M5.6 4.4 L8 2 L10.4 4.4" stroke="#2fb58c" stroke-width="1.55" fill="none"/></svg>
<svg style="left:1016px;top:100px" width="8" height="6" viewBox="0 0 8 6"><path d="M0.8 1 L4 4.4 L7.2 1" fill="none" stroke="#777" stroke-width="1.1"/></svg>
<svg style="left:1042px;top:95px" width="16" height="19" viewBox="0 0 16 19"><path d="M0 2 H16 M0 9 H16" stroke="#3a3a3a" stroke-width="1.55"/><path d="M5.6 14 L8 16.4 L10.4 14" stroke="#2fb58c" stroke-width="1.55" fill="none"/></svg>
<svg style="left:1064px;top:100px" width="8" height="6" viewBox="0 0 8 6"><path d="M0.8 1 L4 4.4 L7.2 1" fill="none" stroke="#777" stroke-width="1.1"/></svg>
<svg style="left:1090px;top:95px" width="16" height="18" viewBox="0 0 16 18"><path d="M0 1.6 H16 M0 15.8 H16 M5.6 8.7 H10.4" stroke="#3a3a3a" stroke-width="1.55"/><path d="M0.6 6.4 L3 8.7 L0.6 11 M15.4 6.4 L13 8.7 L15.4 11" stroke="#2fb58c" stroke-width="1.5" fill="none"/></svg>
<svg style="left:1112px;top:100px" width="8" height="6" viewBox="0 0 8 6"><path d="M0.8 1 L4 4.4 L7.2 1" fill="none" stroke="#777" stroke-width="1.1"/></svg>
<svg style="left:1140px;top:95px" width="12" height="17" viewBox="0 0 12 17"><path d="M3 10 Q0.8 8.4 0.8 5.8 Q1 1 5.8 0.8 Q10.6 1 10.8 5.8 Q10.8 8.4 8.6 10 Z M2.4 12.6 H9.4 M3.4 15.4 H8.4" stroke="#3a3a3a" stroke-width="1.5" fill="none"/></svg>
<svg style="left:1161px;top:100px" width="8" height="6" viewBox="0 0 8 6"><path d="M0.8 1 L4 4.4 L7.2 1" fill="none" stroke="#777" stroke-width="1.1"/></svg>
<svg style="left:1188px;top:97px" width="13" height="13" viewBox="0 0 13 13"><path d="M11.6 1 L1.4 11.4 M1.4 3.4 V11.4 H9.6" stroke="#3a3a3a" stroke-width="1.5" fill="none"/></svg>
<svg style="left:1208px;top:100px" width="8" height="6" viewBox="0 0 8 6"><path d="M0.8 1 L4 4.4 L7.2 1" fill="none" stroke="#777" stroke-width="1.1"/></svg>
<svg style="left:1236px;top:96px" width="15" height="14" viewBox="0 0 15 14"><path d="M1 4.4 H9.4 Q13.6 4.6 13.6 8.4 Q13.6 12.4 9.4 12.6 H2.4 M4.4 1 L1 4.4 L4.4 7.8" stroke="#3a3a3a" stroke-width="1.55" fill="none"/></svg>
<svg style="left:1269px;top:96px" width="15" height="14" viewBox="0 0 15 14"><path d="M14 4.4 H5.6 Q1.4 4.6 1.4 8.4 Q1.4 12.4 5.6 12.6 H12.6 M10.6 1 L14 4.4 L10.6 7.8" stroke="#c8c8c8" stroke-width="1.5" fill="none"/></svg>
<svg style="left:1302px;top:100px" width="16" height="6" viewBox="0 0 16 6"><circle cx="2.2" cy="3" r="1.7" fill="#3a3a3a"/><circle cx="8" cy="3" r="1.7" fill="#3a3a3a"/><circle cx="13.8" cy="3" r="1.7" fill="#3a3a3a"/></svg>
<!--TB-->
<!--BEGIN content-->
<div class="abs" style="left:843px;top:123px;width:444px;height:110px;background:#fff"></div>
<div class="t" style="left:865px;top:131.1px;font-size:14px;line-height:21px;letter-spacing:1.5px;color:#444">关注。肺炎每年导致数百万人死亡,其中多数是儿童和老</div>
<div class="t" style="left:865px;top:156.1px;font-size:14px;line-height:21px;letter-spacing:1.5px;color:#444">人。在这个特殊的日子里,让我们一起了解肺炎的预防与治</div>
<div class="t" style="left:865px;top:181.1px;font-size:14px;line-height:21px;letter-spacing:1.5px;color:#444">疗,为呼吸健康筑起一道坚实的防线。</div>
<div class="abs" style="left:841px;top:259px;width:52px;height:21px;border-radius:4px 4px 0 0;background:#32b08b"></div>
<svg style="left:844px;top:263.5px" width="13" height="13" viewBox="0 0 13 13"><path d="M6.5 1 V12 M1 6.5 H12 M4.6 2.8 L6.5 0.9 L8.4 2.8 M4.6 10.2 L6.5 12.1 L8.4 10.2 M2.8 4.6 L0.9 6.5 L2.8 8.4 M10.2 4.6 L12.1 6.5 L10.2 8.4" stroke="#fff" stroke-width="1.1" fill="none"/></svg>
<div class="t" style="left:861px;top:264.5px;font-size:12px;color:#fff;font-weight:bold;letter-spacing:0.5px">拖动</div>
<div class="abs" style="left:856px;top:291px;width:430px;height:1px;background:#8cc3f7"></div>
<div class="abs" style="left:856px;top:350px;width:430px;height:1px;background:#8cc3f7"></div>
<div class="abs" style="left:865px;top:283px;width:1px;height:75px;background:#2f98f0"></div>
<div class="abs" style="left:1276px;top:283px;width:1px;height:75px;background:#2f98f0"></div>
<svg style="left:842.5px;top:298px" width="46" height="46" viewBox="0 0 46 46"><defs><radialGradient id="rga"><stop offset="0" stop-color="#3fa4f6"/><stop offset="0.45" stop-color="#6bbaf8"/><stop offset="0.8" stop-color="#b4dcfc"/><stop offset="1" stop-color="#cfe8fd"/></radialGradient></defs><circle cx="23" cy="23" r="21.5" fill="url(#rga)" stroke="#eaf5ff" stroke-width="1.4"/><rect x="18" y="9.6" width="10" height="3.8" rx="1" fill="#1685e6"/><path d="M19 14 H27 V15.6 Q30 16.8 30 19.6 V33.6 Q30 35.4 28.2 35.4 H17.8 Q16 35.4 16 33.6 V19.6 Q16 16.8 19 15.6 Z" fill="#f4faff"/><path d="M16 22.6 H30 V33.6 Q30 35.4 28.2 35.4 H17.8 Q16 35.4 16 33.6 Z" fill="#1996f5"/><path d="M21.6 25.6 H30 M24.6 29.4 H30" stroke="#e8f4ff" stroke-width="1.2"/></svg>
<svg style="left:1270px;top:313px" width="18" height="16" viewBox="0 0 18 16"><path d="M0 8 L17.5 0.4 V15.6 Z" fill="#1893f2"/></svg>
<div class="t" style="left:970.5px;width:200px;text-align:center;top:314.5px;font-family:'Liberation Serif','Noto Serif CJK SC',serif;font-size:16.5px;font-weight:bold;letter-spacing:1px;color:#1693f2;-webkit-text-stroke:0.35px #1693f2;text-indent:1px">肺炎的全球现状</div>
<div class="abs" style="left:843px;top:378px;width:444px;height:236px;background:#fff"></div>
<div class="t" style="left:910px;top:410.5px;font-size:14px;line-height:21px;letter-spacing:1.5px;color:#444">根据世界卫生组织的数据,肺炎是全球儿童死亡的主</div>
<div class="t" style="left:865px;top:435.6px;font-size:14px;line-height:21px;letter-spacing:1.5px;color:#444">要原因之一,每年有超过80万5岁以下儿童因此丧命。而在</div>
<div class="t" style="left:865px;top:460.8px;font-size:14px;line-height:21px;letter-spacing:1.5px;color:#444">成年人中,尤其是65岁以上的老年人,肺炎同样是一个严重</div>
<div class="t" style="left:865px;top:485.9px;font-size:14px;line-height:21px;letter-spacing:1.5px;color:#444">的健康威胁。</div>
<div class="t" style="left:910px;top:511.1px;font-size:14px;line-height:21px;letter-spacing:1.5px;color:#444">尽管肺炎的致死率如此之高,但公众对其的认知和重</div>
<div class="t" style="left:865px;top:536.2px;font-size:14px;line-height:21px;letter-spacing:1.5px;color:#444">视程度却远远不够。许多人对肺炎的症状、预防和治疗知</div>
<div class="t" style="left:865px;top:561.4px;font-size:14px;line-height:21px;letter-spacing:1.5px;color:#444">之甚少,导致延误治疗时机。</div>
<svg style="left:838px;top:278px" width="455" height="342" viewBox="0 0 455 342"><rect x="2" y="2.4" width="450.5" height="337" fill="none" stroke="#62c6aa" stroke-width="2" stroke-dasharray="7 3.5"/></svg>
<div class="abs" style="left:844px;top:672px;width:429px;height:1px;background:#8cc3f7"></div>
<div class="abs" style="left:844px;top:731px;width:429px;height:1px;background:#8cc3f7"></div>
<div class="abs" style="left:853px;top:665px;width:1px;height:74px;background:#2f98f0"></div>
<div class="abs" style="left:1264px;top:665px;width:1px;height:74px;background:#2f98f0"></div>
<svg style="left:1241.5px;top:679.5px" width="46" height="46" viewBox="0 0 46 46"><defs><radialGradient id="rgb"><stop offset="0" stop-color="#3fa4f6"/><stop offset="0.45" stop-color="#6bbaf8"/><stop offset="0.8" stop-color="#b4dcfc"/><stop offset="1" stop-color="#cfe8fd"/></radialGradient></defs><circle cx="23" cy="23" r="21.5" fill="url(#rgb)" stroke="#eaf5ff" stroke-width="1.4"/><rect x="18" y="9.6" width="10" height="3.8" rx="1" fill="#1685e6"/><path d="M19 14 H27 V15.6 Q30 16.8 30 19.6 V33.6 Q30 35.4 28.2 35.4 H17.8 Q16 35.4 16 33.6 V19.6 Q16 16.8 19 15.6 Z" fill="#f4faff"/><path d="M16 22.6 H30 V33.6 Q30 35.4 28.2 35.4 H17.8 Q16 35.4 16 33.6 Z" fill="#1996f5"/><path d="M21.6 25.6 H30 M24.6 29.4 H30" stroke="#e8f4ff" stroke-width="1.2"/></svg>
<svg style="left:843px;top:694.5px" width="18" height="16" viewBox="0 0 18 16"><path d="M17.5 8 L0 0.4 V15.6 Z" fill="#1893f2"/></svg>
<div class="t" style="left:958.5px;width:200px;text-align:center;top:696.0px;font-family:'Liberation Serif','Noto Serif CJK SC',serif;font-size:16.5px;font-weight:bold;letter-spacing:1px;color:#1693f2;-webkit-text-stroke:0.35px #1693f2;text-indent:1px">肺炎的高危人群</div>
<div class="abs" style="left:843px;top:760px;width:444px;height:190px;background:#fff"></div>
<div class="t" style="left:910px;top:792.7px;font-size:14px;line-height:21px;letter-spacing:1.5px;color:#444">儿童、老年人、免疫力低下者以及患有慢性疾病的</div>
<div class="t" style="left:865px;top:817.8px;font-size:14px;line-height:21px;letter-spacing:1.5px;color:#444">人群是肺炎的高危人群。他们的免疫系统相对较弱,更容易</div>
<div class="t" style="left:865px;top:842.9px;font-size:14px;line-height:21px;letter-spacing:1.5px;color:#444">受到肺炎球菌等病原体的侵袭。</div>
<div class="t" style="left:910px;top:868.0px;font-size:14px;line-height:21px;letter-spacing:1.5px;color:#444">此外,生活在空气质量差、卫生条件不佳地区的人群,</div>
<div class="t" style="left:865px;top:893.1px;font-size:14px;line-height:21px;letter-spacing:1.5px;color:#444">以及吸烟者和长期暴露于二手烟环境的人,也属于肺炎的高</div>
<div class="t" style="left:865px;top:918.2px;font-size:14px;line-height:21px;letter-spacing:1.5px;color:#444">风险群体。</div>
<!--CONTENT-->
<!--BEGIN status-->
<div class="abs" style="left:808px;top:941px;width:520px;height:30px;background:#f6f6f6"></div>
<div class="t" style="left:820px;top:951px;font-size:12px;color:#444">本文总计1397字26图;</div>
<div class="t" style="left:1097px;top:951px;font-size:12px;color:#444">文本合规校验</div>
<div class="t" style="left:1189px;top:951px;font-size:12px;color:#444">文本纠错校对</div>
<div class="t" style="left:1281px;top:951px;font-size:12px;color:#444">签名</div>
<svg style="left:1309px;top:953px" width="9" height="6" viewBox="0 0 9 6"><path d="M1 5 L4.5 1.6 L8 5" fill="none" stroke="#444" stroke-width="1.2"/></svg>
<!--STATUS-->
<!--BEGIN side-->
<div class="abs" style="left:1328px;top:53px;width:22px;height:918px;background:linear-gradient(90deg,#e2e2e2,#f0f0f0)"></div>
<div class="abs" style="left:1328px;top:164px;width:82px;height:42px;background:#fff;border-radius:0 5px 5px 0"></div>
<svg style="left:1339.8px;top:176.2px" width="17.6" height="17.6" viewBox="0 0 16 16"><path d="M1 4.6 H9 Q14 4.8 14 9 Q14 13.2 9 13.4 H2 M3.8 1.8 L1 4.6 L3.8 7.4" stroke="#333" stroke-width="1.4" fill="none"/></svg>
<div class="t" style="left:1368px;top:179.5px;font-size:13.7px;color:#333">撤销</div>
<div class="abs" style="left:1328px;top:218px;width:82px;height:42px;background:#fff;border-radius:0 5px 5px 0"></div>
<svg style="left:1339.8px;top:230.2px" width="17.6" height="17.6" viewBox="0 0 16 16"><path d="M3.6 15.3 V6.6 L7.8 2.4 H14.2 V15.3 Z" stroke="#333" stroke-width="1.4" fill="none" stroke-linejoin="round"/><path d="M3.4 13 H0.8 V4.8 L5 0.7 H10.8 V2.2" stroke="#333" stroke-width="1.4" fill="none" stroke-linejoin="round"/></svg>
<div class="t" style="left:1368px;top:233.5px;font-size:13.7px;color:#333">复制</div>
<div class="abs" style="left:1328px;top:272px;width:82px;height:42px;background:#fff;border-radius:0 5px 5px 0"></div>
<div class="abs" style="left:1328px;top:326px;width:82px;height:42px;background:#fff;border-radius:0 5px 5px 0"></div>
<div class="abs" style="left:1328px;top:380px;width:82px;height:42px;background:#fff;border-radius:0 5px 5px 0"></div>
<div class="abs" style="left:1328px;top:434px;width:82px;height:42px;background:#fff;border-radius:0 5px 5px 0"></div>
<svg style="left:1339.8px;top:446.2px" width="17.6" height="17.6" viewBox="0 0 16 16"><path d="M1 3.8 H15 M5.4 3.6 V1.4 H10.6 V3.6 M2.8 4 V12.4 Q2.8 14.6 5 14.6 H11 Q13.2 14.6 13.2 12.4 V4 M6.2 6.8 V11.6 M9.8 6.8 V11.6" stroke="#333" stroke-width="1.4" fill="none"/></svg>
<div class="t" style="left:1368px;top:449.5px;font-size:13.7px;color:#333">清空</div>
<div class="abs" style="left:1328px;top:488px;width:82px;height:42px;background:#fff;border-radius:0 5px 5px 0"></div>
<svg style="left:1339.8px;top:500.2px" width="17.6" height="17.6" viewBox="0 0 16 16"><path d="M6 1.4 H1.4 V14.6 H6" stroke="#333" stroke-width="1.4" fill="none"/><path d="M15 8 H6.4 M9.6 4.6 L6.2 8 L9.6 11.4" stroke="#333" stroke-width="1.4" fill="none"/></svg>
<div class="t" style="left:1368px;top:503.5px;font-size:13.7px;color:#333">导入</div>
<div class="abs" style="left:1328px;top:542px;width:82px;height:42px;background:#fff;border-radius:0 5px 5px 0"></div>
<svg style="left:1339.8px;top:554.2px" width="17.6" height="17.6" viewBox="0 0 16 16"><circle cx="2.2" cy="8" r="1.8" fill="#333"/><circle cx="8" cy="8" r="1.8" fill="#333"/><circle cx="13.8" cy="8" r="1.8" fill="#333"/></svg>
<div class="t" style="left:1368px;top:557.5px;font-size:13.7px;color:#333">更多</div>
<!--SIDE-->
<!--BEGIN right-->
<div class="abs" style="left:1592px;top:53px;width:16px;height:918px;background:linear-gradient(90deg,#f0f0f0,#e9e9e9)"></div>
<div class="abs" style="left:1608px;top:53px;width:39px;height:918px;background:#fff"></div>
<svg style="left:1590px;top:58px" width="20" height="76" viewBox="0 0 20 76"><path d="M20 0 Q19 6 9 8 Q2.4 10 2.4 16 V58 Q2.4 64 9 66 Q19 68 20 76 Z" fill="#fff"/></svg>
<svg style="left:1598px;top:90px" width="7" height="12" viewBox="0 0 7 12"><path d="M1.4 1.4 L5.4 6 L1.4 10.6" stroke="#666" stroke-width="1.2" fill="none"/></svg>
<div class="abs" style="left:1613px;top:102px;width:60px;height:26px;border-radius:13px;background:#e8efec"></div>
<div class="t" style="left:1622px;top:108px;font-size:14px;color:#222">全部</div>
<div class="t" style="left:1621px;top:144px;font-size:14px;color:#222">素材</div>
<div class="abs" style="left:1613px;top:174px;width:60px;height:26px;border-radius:13px;border:1px solid #e6e6e6;background:#fff"></div>
<div class="t" style="left:1622px;top:180px;font-size:14px;color:#222">更多</div>
<div class="abs" style="left:1612px;top:213px;width:60px;height:28px;border-radius:4px;border:1px solid #dcdcdc;background:#fff"></div>
<div class="t" style="left:1623px;top:220px;font-size:14px;color:#ccc">搜索</div>
<div class="abs" style="left:1608px;top:244px;width:39px;height:34px;background:#fafafa"></div><div class="abs" style="left:1612px;top:248px;width:15px;height:15px;background:#fff"></div><div class="abs" style="left:1627px;top:248px;width:11px;height:15px;background:#ebebeb"></div><div class="abs" style="left:1612px;top:263px;width:15px;height:14px;background:#ebebeb"></div><div class="abs" style="left:1627px;top:263px;width:11px;height:14px;background:#fff"></div>
<div class="abs" style="left:1640px;top:254px;width:10px;height:5px;background:#4fbf9f;border-radius:2.5px"></div><div class="abs" style="left:1641px;top:261px;width:6px;height:2px;background:#bbb"></div><div class="abs" style="left:1641px;top:271px;width:6px;height:2px;background:#ccc"></div>
<div class="abs" style="left:1608px;top:278px;width:4px;height:693px;background:#f8f8f8"></div>
<div class="abs" style="left:1608px;top:498px;width:39px;height:3px;background:#f5f5f5"></div>
<div class="abs" style="left:1608px;top:617px;width:39px;height:3px;background:#f5f5f5"></div>
<div class="abs" style="left:1608px;top:739px;width:39px;height:3px;background:#f5f5f5"></div>
<div class="abs" style="left:1608px;top:865px;width:39px;height:3px;background:#f5f5f5"></div>
<div class="abs" style="left:1608px;top:938px;width:39px;height:3px;background:#f5f5f5"></div>
<div class="abs" style="left:1627px;top:621px;width:15px;height:6px;background:#ececec"></div>
<div class="abs" style="left:1627px;top:711px;width:15px;height:6px;background:#ececec"></div>
<div class="abs" style="left:1627px;top:744px;width:15px;height:6px;background:#ececec"></div>
<div class="abs" style="left:1627px;top:868px;width:15px;height:6px;background:#ececec"></div>
<div class="abs" style="left:1635px;top:405px;width:12px;height:16px;background:#eaf0f8"></div>
<div class="abs" style="left:1635px;top:439px;width:12px;height:20px;background:#3e64d8"></div>
<div class="t" style="left:1635px;top:474px;font-size:14px;color:#222">83</div>
<div class="abs" style="left:1612px;top:502px;width:35px;height:83px;background:#48484c"></div>
<div class="abs" style="left:1640px;top:510px;width:7px;height:6px;background:#b8623a"></div>
<div class="t" style="left:1618px;top:598px;font-size:14px;color:#222">e915</div>
<div class="abs" style="left:1612px;top:621px;width:35px;height:84px;background:#fbfbfb;border-top:1px solid #f0f0f0"></div>
<div class="abs" style="left:1622px;top:632px;width:25px;height:60px;background:#fff;border:1px solid #f0f0f0"></div>
<div class="t" style="left:1618px;top:722px;font-size:14px;color:#222">2e23</div>
<div class="abs" style="left:1612px;top:744px;width:35px;height:92px;background:#fdfdfd"></div>
<div class="abs" style="left:1613px;top:750px;width:9px;height:3px;background:#5fc2a3;border-radius:1px"></div>
<div class="abs" style="left:1627px;top:760px;width:20px;height:27px;background:linear-gradient(135deg,#d98a3a,#a85a22 60%,#c9803a)"></div>
<div class="abs" style="left:1627px;top:796px;width:20px;height:16px;background:linear-gradient(135deg,#d98a3a,#a85a22 60%,#c9803a)"></div>
<div class="abs" style="left:1627px;top:817px;width:20px;height:18px;background:linear-gradient(135deg,#d98a3a,#a85a22 60%,#c9803a)"></div>
<div class="abs" style="left:1612px;top:879px;width:35px;height:56px;background:#4a4a52"></div>
<div class="abs" style="left:1626px;top:893px;width:21px;height:16px;background:#9a5a30"></div><div class="abs" style="left:1626px;top:916px;width:21px;height:14px;background:#8a5230"></div>
<div class="abs" style="left:1615px;top:942px;width:24px;height:24px;border-radius:3px;background:#2fb08a;color:#fff;font-size:13px;line-height:24px;text-align:center">1</div>
<div class="abs" style="left:1641px;top:942px;width:24px;height:24px;border-radius:3px;border:1px solid #ddd;background:#fff"></div>
<!--RIGHT-->
<!--BEGIN popup-->
<div class="abs" style="left:1328px;top:277px;width:317px;height:141px;border:1px solid #dcdcdc;border-radius:8px;background:#fff;box-shadow:0 2px 8px rgba(0,0,0,0.10)"></div>
<div class="abs" style="left:1322px;top:293px;width:5px;height:96px;border-radius:3px;background:#d2d2d2"></div>
<div class="abs" style="left:1339px;top:294px;width:2px;height:16px;background:#2fb08a"></div>
<div class="t" style="left:1347px;top:294px;font-size:14.3px;color:#222">虚线框工具条-素材ID: 250178</div>
<div class="t" style="left:1584px;top:294px;font-size:14px;color:#666">+1</div>
<svg style="left:1614px;top:293px" width="17" height="17" viewBox="0 0 17 17"><circle cx="8.5" cy="8.5" r="7.4" stroke="#444" stroke-width="1.1" fill="none"/><path d="M6.8 5.2 L11.6 8.5 L6.8 11.8 Z" stroke="#444" stroke-width="1.1" fill="none" stroke-linejoin="round"/></svg>
<div class="t" style="left:1339px;top:328px;font-size:14px;color:#222">6种色:</div>
<div class="abs" style="left:1382px;top:324px;width:20px;height:20px;border-radius:2px;background:#3a90f8"></div>
<div class="abs" style="left:1407px;top:324px;width:20px;height:20px;border-radius:2px;background:#9dcdfc"></div>
<div class="abs" style="left:1432px;top:324px;width:20px;height:20px;border-radius:2px;background:#0e96f3"></div>
<div class="abs" style="left:1457px;top:324px;width:20px;height:20px;border-radius:2px;background:#0e96f3"></div>
<div class="abs" style="left:1482px;top:324px;width:20px;height:20px;border-radius:2px;background:#ffffff;border:1px solid #e8e8e8"></div>
<div class="abs" style="left:1507px;top:324px;width:20px;height:20px;border-radius:2px;background:#333333"></div>
<svg style="left:1343px;top:358px" width="17" height="17" viewBox="0 0 17 17"><rect x="1.6" y="1.4" width="13.8" height="6" stroke="#333" stroke-width="1.55" fill="none"/><path d="M0.8 11 H16.2 M0.8 15 H16.2" stroke="#333" stroke-width="1.55" fill="none"/></svg>
<svg style="left:1374px;top:358px" width="17" height="17" viewBox="0 0 17 17"><path d="M0.8 2 H16.2 M0.8 6 H16.2" stroke="#333" stroke-width="1.55" fill="none"/><rect x="1.6" y="9.6" width="13.8" height="6" stroke="#333" stroke-width="1.55" fill="none"/></svg>
<svg style="left:1403px;top:358px" width="17" height="17" viewBox="0 0 17 17"><path d="M0.8 3 H9 M0.8 8.5 H9 M0.8 14 H9 M13.4 15.6 V2 M10.6 4.8 L13.4 1.8 L16.2 4.8" stroke="#333" stroke-width="1.55" fill="none"/></svg>
<svg style="left:1433px;top:358px" width="17" height="17" viewBox="0 0 17 17"><path d="M0.8 3 H9 M0.8 8.5 H9 M0.8 14 H9 M13.4 1.4 V15 M10.6 12.2 L13.4 15.2 L16.2 12.2" stroke="#333" stroke-width="1.55" fill="none"/></svg>
<svg style="left:1464px;top:358px" width="17" height="17" viewBox="0 0 17 17"><rect x="5" y="5" width="11" height="11" rx="3" stroke="#333" stroke-width="1.55" fill="none"/><path d="M3 12.4 Q1 12 1 9.6 V4 Q1 1 4 1 H9.6 Q12 1 12.4 3 M10.5 7.8 V13.2 M7.8 10.5 H13.2" stroke="#333" stroke-width="1.55" fill="none"/></svg>
<svg style="left:1495px;top:358px" width="17" height="17" viewBox="0 0 17 17"><path d="M5.6 13.4 L1.4 9.2 L9 1.6 L15 7.6 L9.2 13.4 Z M4.4 6.6 L10.2 12.4" stroke="#333" stroke-width="1.55" fill="none" stroke-linejoin="round"/><path d="M8 16 H16" stroke="#2fb08a" stroke-width="1.3"/></svg>
<svg style="left:1524px;top:358px" width="17" height="17" viewBox="0 0 17 17"><circle cx="3.6" cy="13" r="2.6" stroke="#333" stroke-width="1.55" fill="none"/><circle cx="13.4" cy="13" r="2.6" stroke="#333" stroke-width="1.55" fill="none"/><path d="M5.2 11 L13.6 1 M11.8 11 L3.4 1" stroke="#333" stroke-width="1.55" fill="none"/></svg>
<svg style="left:1555px;top:358px" width="17" height="17" viewBox="0 0 17 17"><circle cx="8.5" cy="8.5" r="7.4" stroke="#333" stroke-width="1.55" fill="none"/><path d="M8.5 1.1 A7.4 7.4 0 0 1 8.5 15.9 Z" fill="#333"/></svg>
<svg style="left:1584px;top:358px" width="17" height="17" viewBox="0 0 17 17"><path d="M1 3.8 H16 M5.6 3.6 V1.2 H11.4 V3.6 M3 4 V13 Q3 15.6 5.6 15.6 H11.4 Q14 15.6 14 13 V4 M6.6 7 V12.4 M10.4 7 V12.4" stroke="#333" stroke-width="1.55" fill="none"/></svg>
<div class="abs" style="left:1609px;top:354px;width:26px;height:26px;border-radius:4px;background:#e6eeeb"></div>
<svg style="left:1614px;top:364px" width="16" height="6" viewBox="0 0 16 6"><circle cx="2.4" cy="3" r="1.9" fill="#555"/><circle cx="8" cy="3" r="1.9" fill="#555"/><circle cx="13.6" cy="3" r="1.9" fill="#555"/></svg>
<div class="t" style="left:1341px;top:388px;font-size:14px;color:#222">宽度</div>
<div class="t" style="left:1378px;top:388px;font-size:14px;color:#222">边距</div>
<div class="t" style="left:1415px;top:388px;font-size:14px;color:#222">段与块</div>
<div class="t" style="left:1466px;top:388px;font-size:14px;color:#222">块背景</div>
<div class="abs" style="left:1492px;top:386.5px;width:142.5px;height:162px;border-radius:8px;background:#fff;box-shadow:0 2px 10px rgba(0,0,0,0.16),0 0 1px rgba(0,0,0,0.2)"></div>
<svg style="left:1515px;top:406px" width="18" height="17" viewBox="0 0 18 17"><rect x="1" y="1.4" width="5.6" height="14" stroke="#333" stroke-width="1.55" fill="none"/><path d="M10.4 1.4 H16.4 V15.4 H10.4 Z" stroke="#333" stroke-width="1.55" fill="none" stroke-dasharray="3 2.6"/></svg>
<div class="t" style="left:1544px;top:408px;font-size:14px;color:#222">偏移</div>
<svg style="left:1515px;top:442px" width="18" height="18" viewBox="0 0 18 18"><path d="M9 2.4 L11 7 L15.8 7.4 L12.4 10.6 M9 2.4 L6.8 7 L2 7.6 L5.6 11 L4.6 15.8 L9 13.4 L13.2 15.8 L12.4 10.6" stroke="#333" stroke-width="1.55" fill="none" stroke-linejoin="round" stroke-linecap="round"/><path d="M11.6 6 L15.6 1.6" stroke="#333" stroke-width="1.55" fill="none"/></svg>
<div class="t" style="left:1544px;top:444px;font-size:14px;color:#222">DIY收藏</div>
<svg style="left:1515px;top:478px" width="18" height="18" viewBox="0 0 18 18"><path d="M2 9 V15.8 H16 V9 M9 12 V2.4 M4.6 2.4 H13.4" stroke="#333" stroke-width="1.55" fill="none"/></svg>
<div class="t" style="left:1544px;top:480px;font-size:14px;color:#222">格式</div>
<svg style="left:1515px;top:514px" width="18" height="19" viewBox="0 0 18 19"><rect x="1.4" y="8.6" width="11.6" height="9" rx="2.4" stroke="#333" stroke-width="1.55" fill="none"/><path d="M6 4.2 Q15.4 3.4 15.6 11.6 M8.4 1.4 L5.6 4.2 L8.4 7" stroke="#333" stroke-width="1.55" fill="none"/></svg>
<div class="t" style="left:1544px;top:516px;font-size:14px;color:#222">框旋转</div>
<svg style="left:1610px;top:410px" width="6" height="10" viewBox="0 0 6 10"><path d="M1 1 L4.6 5 L1 9" stroke="#777" stroke-width="1.1" fill="none"/></svg>
<svg style="left:1610px;top:482px" width="6" height="10" viewBox="0 0 6 10"><path d="M1 1 L4.6 5 L1 9" stroke="#777" stroke-width="1.1" fill="none"/></svg>
<svg style="left:1610px;top:518.5px" width="6" height="10" viewBox="0 0 6 10"><path d="M1 1 L4.6 5 L1 9" stroke="#777" stroke-width="1.1" fill="none"/></svg>
<div class="abs" style="left:1599.5px;top:339px;width:60px;height:48.5px;border:4px solid #f44c4c"></div>
<div class="abs" style="left:1495.2px;top:429px;width:125.6px;height:39.8px;border:4.2px solid #f44c4c;border-radius:2px"></div>
<svg style="left:0;top:0" width="1647" height="975" viewBox="0 0 1647 975"><polygon points="1442.3,424.8 1543.2,379.7 1541.9,388.3 1561.5,366.8 1532.5,368.9 1540.0,373.2" fill="#f84e4e"/><polygon points="1414.0,575.6 1484.2,497.4 1486.4,505.1 1494.6,479.4 1470.7,492.0 1478.7,492.8" fill="#f84e4e"/></svg>
<!--POPUP-->
<!--BEGIN bottom-->
<div class="abs" style="left:0;top:971px;width:1647px;height:4px;background:#d4e5ec"></div>
<!--BOTTOM-->
</body>
</html>
